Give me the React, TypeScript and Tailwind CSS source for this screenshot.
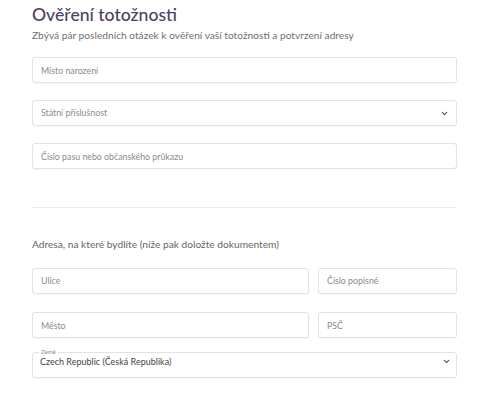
import { ChevronDown } from "lucide-react";

const inputCls =
  "h-[26px] w-full rounded-[3px] border border-[#e3e3e3] bg-white px-[8px] text-[8.8px] text-[#333] placeholder:text-[#8a8a8a] shadow-[0_1px_2px_rgba(0,0,0,0.04)] outline-none";

const Field = ({ placeholder }: { placeholder: string }) => (
  <input className={inputCls} placeholder={placeholder} readOnly />
);

const SelectField = ({ placeholder }: { placeholder: string }) => (
  <div className="flex h-[26px] w-full items-center justify-between rounded-[3px] border border-[#e3e3e3] bg-white pl-[8px] pr-[7px] shadow-[0_1px_2px_rgba(0,0,0,0.04)]">
    <span className="text-[8.8px] text-[#8a8a8a]">{placeholder}</span>
    <ChevronDown size={9} strokeWidth={3} className="text-[#555]" />
  </div>
);

export default function App() {
  return (
    <div className="min-h-[400px] w-[484px] bg-white font-['Lato','Noto_Sans',sans-serif]">
      <div className="flex flex-col pl-[32px] pr-[27px] pt-[4px]">
        <h1 className="text-[17.6px] font-medium leading-[21px] text-[#4d3f66]">
          Ověření totožnosti
        </h1>
        <p className="mt-[4px] text-[10.2px] leading-[12px] text-[#707070]">
          Zbývá pár posledních otázek k ověření vaší totožnosti a potvrzení adresy
        </p>

        <div className="mt-[16px] flex flex-col gap-[17px]">
          <Field placeholder="Místo narození" />
          <SelectField placeholder="Státní příslušnost" />
          <Field placeholder="Číslo pasu nebo občanského průkazu" />
        </div>

        <hr className="mt-[38px] border-t border-[#ececec]" />

        <p className="mt-[30px] text-[10.2px] leading-[12px] text-[#666]">
          Adresa, na které bydlíte (níže pak doložte dokumentem)
        </p>

        <div className="mt-[16px] flex flex-col gap-[17px]">
          <div className="flex gap-[9px]">
            <div className="w-[277px]">
              <Field placeholder="Ulice" />
            </div>
            <div className="flex-1">
              <Field placeholder="Číslo popisné" />
            </div>
          </div>
          <div className="flex gap-[9px]">
            <div className="w-[277px]">
              <Field placeholder="Město" />
            </div>
            <div className="flex-1">
              <Field placeholder="PSČ" />
            </div>
          </div>
        </div>

        <fieldset className="mt-[11px] flex h-[29px] items-center justify-between rounded-[3px] border border-[#e3e3e3] pl-[6px] pr-[5px] pb-[2px] shadow-[0_1px_2px_rgba(0,0,0,0.04)]">
          <legend className="px-[2px] text-[6px] leading-[6px] text-[#888]">Země</legend>
          <span className="pl-[1px] text-[9px] text-[#444]">Czech Republic (Česká Republika)</span>
          <ChevronDown size={9} strokeWidth={3} className="text-[#555]" />
        </fieldset>
      </div>
    </div>
  );
}
